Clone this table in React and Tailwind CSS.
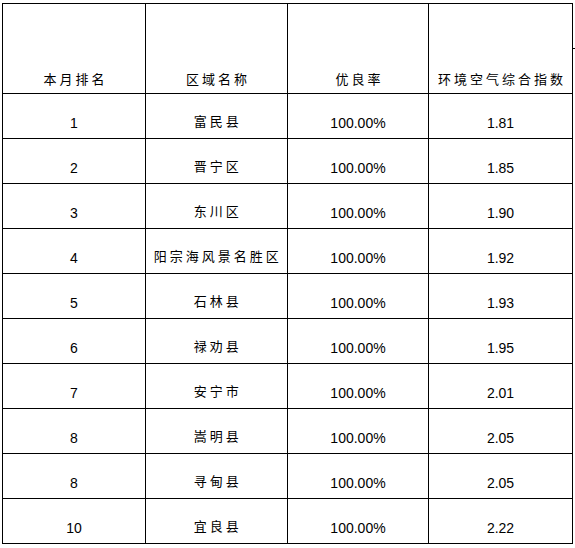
import React from 'react';

const rows = [
    ['1', '富民县', '100.00%', '1.81'],
    ['2', '晋宁区', '100.00%', '1.85'],
    ['3', '东川区', '100.00%', '1.90'],
    ['4', '阳宗海风景名胜区', '100.00%', '1.92'],
    ['5', '石林县', '100.00%', '1.93'],
    ['6', '禄劝县', '100.00%', '1.95'],
    ['7', '安宁市', '100.00%', '2.01'],
    ['8', '嵩明县', '100.00%', '2.05'],
    ['8', '寻甸县', '100.00%', '2.05'],
    ['10', '宜良县', '100.00%', '2.22'],
];

const headers = ['本月排名', '区域名称', '优良率', '环境空气综合指数'];

const cjk = "font-['Noto_Sans_CJK_SC',sans-serif] text-[13px] tracking-[3px] leading-[16px]";
const num = "font-['Liberation_Sans',Arial,sans-serif] text-[14px] leading-[16px]";

const App = () => {
    return (
        <div className="w-[575px] h-[548px] bg-white overflow-hidden flex pl-[2px] pt-[3px]">
            <table className="table-fixed border-collapse w-[570px] h-[541px] text-black">
                <colgroup>
                    <col className="w-[143px]" />
                    <col className="w-[142px]" />
                    <col className="w-[141px]" />
                    <col className="w-[144px]" />
                </colgroup>
                <thead>
                    <tr className="h-[90px]">
                        {headers.map((h) => (
                            <th
                                key={h}
                                className={`border border-black p-0 pb-[6px] align-bottom text-center font-normal whitespace-nowrap ${cjk}`}
                            >
                                <span className="mr-[-3px]">{h}</span>
                            </th>
                        ))}
                    </tr>
                </thead>
                <tbody>
                    {rows.map((r, i) => (
                        <tr key={i} className="h-[45px]">
                            <td className={`border border-black p-0 pb-[7px] align-bottom text-center ${num}`}>{r[0]}</td>
                            <td className={`border border-black p-0 pb-[9px] align-bottom text-center whitespace-nowrap ${cjk} tracking-[2.5px]`}>
                                <span className="mr-[-2.5px]">{r[1]}</span>
                            </td>
                            <td className={`border border-black p-0 pb-[7px] align-bottom text-center ${num}`}>{r[2]}</td>
                            <td className={`border border-black p-0 pb-[7px] align-bottom text-center ${num}`}>{r[3]}</td>
                        </tr>
                    ))}
                </tbody>
            </table>
            <div className="w-[4px] shrink-0">
                <div className="mt-[45px] h-px bg-black" />
            </div>
        </div>
    );
};

export default App;
